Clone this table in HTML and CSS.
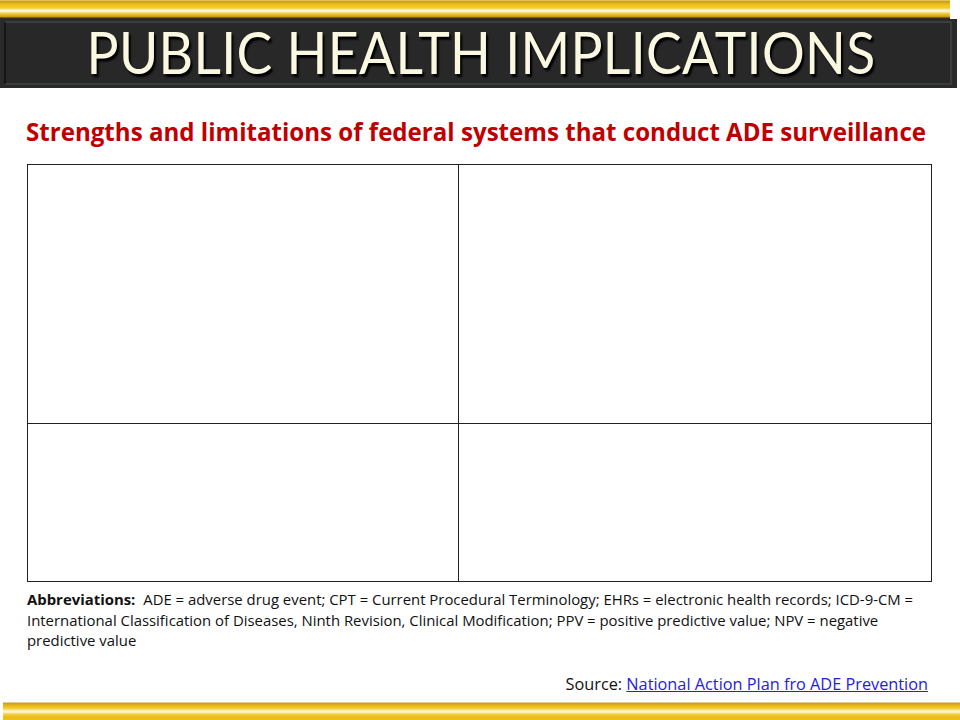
FILE: index.html
```html
<!DOCTYPE html>
<html lang="en">
<head>
<meta charset="utf-8">
<title>Public Health Implications</title>
<link rel="stylesheet" href="styles.css">
</head>
<body>
<div class="slide">
  <div class="topbar"></div>
  <div class="titlebar">
    <div class="titlebox">
      <h1 class="title">PUBLIC HEALTH IMPLICATIONS</h1>
    </div>
  </div>
  <h2 class="subtitle">Strengths and limitations of federal systems that conduct ADE surveillance</h2>
  <div class="grid">
    <div class="cell c1"></div>
    <div class="cell c2"></div>
    <div class="cell c3"></div>
    <div class="cell c4"></div>
  </div>
  <p class="abbr"><b class="abbr-label">Abbreviations:</b> ADE = adverse drug event; CPT = Current Procedural Terminology; EHRs = electronic health records; ICD-9-CM =<br>International Classification of Diseases, Ninth Revision, Clinical Modification; PPV = positive predictive value; NPV = negative<br>predictive value</p>
  <p class="source">Source: <a href="#">National Action Plan fro ADE Prevention</a></p>
  <div class="bottombar"></div>
</div>
</body>
</html>
```
FILE: styles.css
```css
html, body {
  margin: 0;
  padding: 0;
  background: #ffffff;
}
.slide {
  width: 960px;
  height: 720px;
  overflow: hidden;
  display: flex;
  flex-direction: column;
  font-family: "Open Sans", Lato, "Liberation Sans", sans-serif;
  color: #111;
}
.topbar {
  height: 19px;
  margin-right: 10px;
  background: linear-gradient(to bottom,
    #f6e7a0 0px, #c99d1c 1px, #dcae1c 3px, #f2c41a 5px, #f4cc2a 8px,
    #fbf3cf 10px, #fffbe8 11px, #f3d55a 13px, #e8b81a 15px, #c59414 17px, #3c2f10 18px, #2b2b2b 19px);
}
.titlebar {
  height: 69px;
  margin-right: 3px;
  background: #2a2a2a;
  padding: 2px 5px 3px 4px;
  box-sizing: border-box;
  display: flex;
}
.titlebox {
  flex: 1;
  border: 2px solid #3a3d3d;
  border-left-color: #151515;
  background: #282828;
  display: flex;
  align-items: center;
  justify-content: center;
}
.title {
  margin: 0;
  font-family: Lato, "Open Sans", sans-serif;
  font-weight: 400;
  font-size: 53.5px;
  line-height: 1;
  color: #fbf8e2;
  text-shadow: 2px 2px 2px #000;
  letter-spacing: 0.3px;
  padding-left: 6px;
  transform: scaleY(1.07);
}
.subtitle {
  margin: 28px 0 0 26px;
  font-family: "Open Sans", Lato, sans-serif;
  font-weight: 700;
  font-size: 24.1px;
  line-height: 31px;
  color: #c00000;
  white-space: nowrap;
}
.grid {
  margin: 17px 0 0 27px;
  width: 905px;
  height: 418px;
  box-sizing: border-box;
  border: 1px solid #222;
  display: grid;
  grid-template-columns: 431px 1fr;
  grid-template-rows: 259px 1fr;
}
.c1, .c3 {
  border-right: 1px solid #222;
}
.c1, .c2 {
  border-bottom: 1px solid #222;
}
.abbr {
  margin: 7px 0 0 27px;
  font-size: 14.9px;
  line-height: 20.5px;
  color: #111;
  white-space: nowrap;
}
.abbr-label {
  font-weight: 700;
  margin-right: 4px;
}
.source {
  margin: 23px 32px 0 0;
  text-align: right;
  font-size: 16.3px;
  line-height: 20px;
  color: #111;
}
.source a {
  color: #2222dd;
  text-decoration: underline;
}
.bottombar {
  margin-top: auto;
  margin-left: 3px;
  height: 18px;
  background: linear-gradient(to bottom,
    #ffffff 0px, #c99d1c 1px, #e0b21c 3px, #f4ca22 6px,
    #fbf0c8 9px, #fff9e4 10px, #f3d24a 12px, #ecbb18 15px, #f0c020 18px);
}
```
